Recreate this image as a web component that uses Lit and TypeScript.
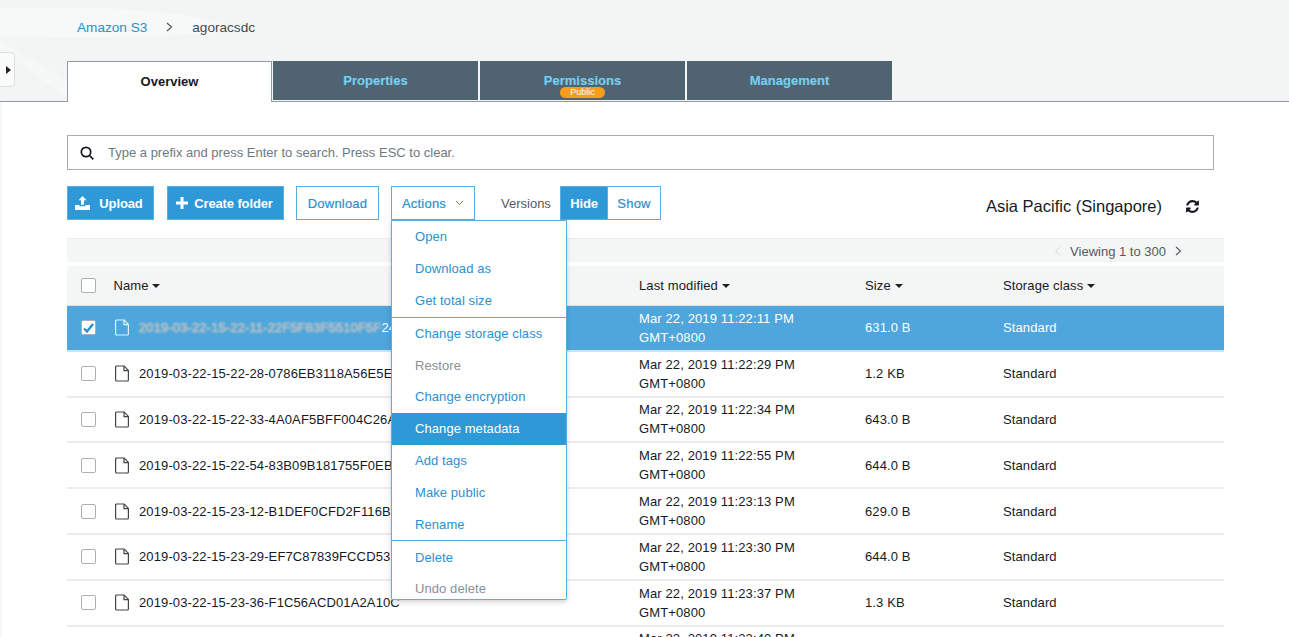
import { LitElement, html, css, svg } from "lit";
import { customElement } from "lit/decorators.js";

const rows = [
  ["2019-03-22-15-22-11-22F5F83F5510F5F", "11:22:11", "631.0 B"],
  ["2019-03-22-15-22-28-0786EB3118A56E5E", "11:22:29", "1.2 KB"],
  ["2019-03-22-15-22-33-4A0AF5BFF004C26A", "11:22:34", "643.0 B"],
  ["2019-03-22-15-22-54-83B09B181755F0EB", "11:22:55", "644.0 B"],
  ["2019-03-22-15-23-12-B1DEF0CFD2F116B", "11:23:13", "629.0 B"],
  ["2019-03-22-15-23-29-EF7C87839FCCD53", "11:23:30", "644.0 B"],
  ["2019-03-22-15-23-36-F1C56ACD01A2A10C", "11:23:37", "1.3 KB"],
  ["", "11:23:40", ""],
];

const menu: [string, string][] = [
  ["Open", ""], ["Download as", ""], ["Get total size", "sep"],
  ["Change storage class", ""], ["Restore", "off"], ["Change encryption", ""],
  ["Change metadata", "hot"], ["Add tags", ""], ["Make public", ""], ["Rename", "sep"],
  ["Delete", ""], ["Undo delete", "off"],
];

const fileIcon = svg`<svg class="file" width="15" height="17" viewBox="0 0 15 17" fill="none" stroke="currentColor" stroke-width="1.2"><path d="M1.6 1h7.6l4.2 4.4v9.6a1 1 0 0 1-1 1H1.6a1 1 0 0 1-1-1V2a1 1 0 0 1 1-1z"/><path d="M9 1v4.6h4.4"/></svg>`;
const caret = html`<span class="caret"></span>`;

@customElement("app-root")
export class AppRoot extends LitElement {
  static styles = css`
    :host { display: block; height: 637px; overflow: hidden; position: relative; background: #fff;
      font-family: "Liberation Sans", Arial, sans-serif; font-size: 13px; color: #16191f; }
    .top { position: relative; height: 101px; background: #f3f5f5; border-bottom: 1px solid #8f9aa3; box-sizing: content-box; display: flex; flex-direction: column; padding-left: 67px; }
    .swoosh { position: absolute; left: 0; top: 0; }
    .crumbs { position: relative; height: 61px; display: flex; align-items: center; font-size: 13.6px; padding: 0 0 7px 10px; box-sizing: border-box; color: #3f4a52; }
    .crumbs a { color: #2b8fcf; }
    .crumbs svg { margin: 0 19px; }
    .tabs { position: relative; display: flex; height: 40px; }
    .tab { width: 205px; margin-right: 2px; background: #4f6370; color: #74d0f0; font-weight: bold; display: flex; flex-direction: column; align-items: center; padding-top: 12px; box-sizing: border-box; position: relative; line-height: 15px; height: 39px; -webkit-text-stroke: 0.15px; }
    .tab.on { background: #fff; color: #16191f; border: 1px solid #8f9aa3; border-bottom: 0; height: 41px; width: 205px; margin-right: 1px; padding-top: 12px; font-weight: bold; -webkit-text-stroke: 0; }
    .badge { position: absolute; top: 26px; left: 80px; width: 45px; height: 11px; border-radius: 6px; background: #f89c1c; color: #fff; font-size: 9px; line-height: 11px; text-align: center; font-weight: normal; -webkit-text-stroke: 0; }
    .handle { position: absolute; left: -1px; top: 52px; width: 14px; height: 33px; background: #fbfbfb; border: 1px solid #dcdfe1; border-radius: 0 4px 4px 0; display: flex; align-items: center; justify-content: center; }
    .handle i { width: 0; height: 0; border-left: 5px solid #222; border-top: 4.5px solid transparent; border-bottom: 4.5px solid transparent; margin-left: 2px; }
    .edge { position: absolute; left: 0; top: 102px; bottom: 0; width: 2px; background: #f5f6f6; }
    .main { padding: 33px 65px 0 67px; }
    .search { width: 1147px; height: 35px; box-sizing: border-box; border: 1px solid #a9acae; display: flex; align-items: center; padding-left: 12px; color: #6f7880; gap: 14px; font-size: 13px; }
    .bar { display: flex; align-items: center; height: 34px; margin-top: 16px; width: 1157px; }
    .btn { height: 34px; box-sizing: border-box; border: 1px solid #5aaee0; color: #2b8fcf; background: #fff; display: flex; align-items: center; justify-content: center; letter-spacing: .2px; -webkit-text-stroke: 0.2px; }
    .btn.fill { background: #2f98d6; color: #fff; font-weight: bold; letter-spacing: -.12px; -webkit-text-stroke: 0; }
    .upload { width: 87px; gap: 9px; padding-right: 3px; }
    .create { width: 117px; margin-left: 13px; gap: 6px; padding-right: 2px; }
    .dl { width: 83px; margin-left: 12px; }
    .actions { width: 84px; margin-left: 12px; gap: 9px; }
    .versions { margin-left: 26px; width: 59px; color: #545b64; }
    .hide { width: 48px; }
    .show { width: 54px; margin-left: -1px; }
    .region { margin-left: auto; font-size: 16.5px; margin-right: 24px; color: #16191f; display: flex; align-items: center; padding-top: 6px; }
    .region svg { margin-left: 23px; }
    .pager { margin-top: 18px; width: 1157px; height: 24px; border-top: 1px solid #ebecec; background: #f4f5f5; box-sizing: border-box; display: flex; align-items: center; justify-content: flex-end; padding: 1px 42px 0 0; color: #545b64; gap: 9px; }
    .head, .row { display: grid; grid-template-columns: 32.5px 525.5px 226px 138px 1fr; width: 1157px; align-items: center; box-sizing: border-box; letter-spacing: .12px; }
    .head { margin-top: 4px; height: 40px; background: #f4f5f5; border-bottom: 1px solid #dfe2e2; padding-left: 14px; }
    .row { height: 45.8px; border-bottom: 2px solid #eaeded; padding-left: 14px; line-height: 19px; color: #16191f; }
    .row.sel { background: #4ea6dc; color: #fff; border-bottom-color: #cfe4f2; }
    .name { display: flex; align-items: center; white-space: nowrap; overflow: hidden; padding-left: 1.5px; }
    .name .file { margin-right: 9px; color: #444; flex: none; }
    .sel .name .file { color: #e4f2fb; }
    .blur { color: #c4c4c4; -webkit-text-stroke: 0.6px #c4c4c4; filter: blur(1px); }
    .box { width: 15px; height: 15px; box-sizing: border-box; border: 1px solid #aab0b4; border-radius: 2px; background: #fff; display: flex; align-items: center; justify-content: center; }
    .caret { display: inline-block; width: 0; height: 0; vertical-align: 2px; border-top: 4px solid #222; border-left: 4px solid transparent; border-right: 4px solid transparent; }
    .menu { position: absolute; left: 391px; top: 220px; width: 176px; height: 380px; box-sizing: border-box; background: #fff; border: 1px solid #5aaee0; border-radius: 0 0 2px 2px; box-shadow: 0 2px 5px rgba(0,0,0,.18); display: flex; flex-direction: column; letter-spacing: .08px; }
    .item { height: 31.75px; flex: none; box-sizing: border-box; padding-left: 23px; display: flex; align-items: center; color: #2b8fcf; }
    .item.sep { border-bottom: 1px solid #5aaee0; height: 33.1px; }
    .item.off { color: #8a8f94; }
    .item.hot { background: #2f98d6; color: #fff; }
  `;

  render() {
    return html`
      <div class="top">
        <svg class="swoosh" width="280" height="101" viewBox="0 0 280 101" fill="none"><path d="M0 8c90-2 190 0 240 22-60 8-170 8-240 6z" fill="#f7f8f8"/><path d="M0 50l70 50h30L0 40z" fill="#f6f7f7"/></svg>
        <div class="crumbs"><a>Amazon S3</a><svg width="7" height="10" viewBox="0 0 7 10" fill="none" stroke="#4a5056" stroke-width="1.1"><path d="M1 1l4.5 4L1 9"/></svg><span>agoracsdc</span></div>
        <div class="tabs">
          <div class="tab on">Overview</div>
          <div class="tab">Properties</div>
          <div class="tab">Permissions<span class="badge">Public</span></div>
          <div class="tab">Management</div>
        </div>
      </div>
      <div class="handle"><i></i></div>
      <div class="edge"></div>
      <div class="main">
        <div class="search">
          <svg width="14" height="14" viewBox="0 0 14 14" fill="none" stroke="#16191f" stroke-width="1.7"><circle cx="6" cy="6" r="4.7"/><path d="M9.5 9.5l3.8 3.8"/></svg>
          <span>Type a prefix and press Enter to search. Press ESC to clear.</span>
        </div>
        <div class="bar">
          <div class="btn fill upload"><svg width="15" height="14" viewBox="0 0 15 14" fill="#fff"><path d="M7.5 0l4 4.2H9v4.6H6V4.2H3.500z"/><path d="M0 9h4.500v1.300h6V9H15v5H0z"/></svg>Upload</div>
          <div class="btn fill create"><svg width="12" height="12" viewBox="0 0 12 12" fill="#fff"><path d="M4.500 0h3v4.500H12v3H7.500V12h-3V7.500H0v-3h4.500z"/></svg>Create folder</div>
          <div class="btn dl">Download</div>
          <div class="btn actions">Actions<svg width="9" height="6" viewBox="0 0 9 6" fill="none" stroke="#2b8fcf" stroke-width="1"><path d="M1 1l3.500 3.500L8 1"/></svg></div>
          <div class="versions">Versions</div>
          <div class="btn fill hide">Hide</div>
          <div class="btn show">Show</div>
          <div class="region">Asia Pacific (Singapore)<svg width="15" height="15" viewBox="0 0 1792 1792" fill="#16191f"><path d="M1639 1056q0 5-1 7-64 268-268 434.5t-478 166.5q-146 0-282.5-55t-243.5-157l-129 129q-19 19-45 19t-45-19-19-45v-448q0-26 19-45t45-19h448q26 0 45 19t19 45-19 45l-137 137q71 66 161 102t187 36q134 0 250-65t186-179q11-17 53-117 8-23 30-23h192q13 0 22.500 9.500t9.500 22.500zm25-800v448q0 26-19 45t-45 19h-448q-26 0-45-19t-19-45 19-45l138-138q-148-137-349-137-134 0-250 65t-186 179q-11 17-53 117-8 23-30 23h-199q-13 0-22.500-9.500t-9.500-22.500v-7q65-268 270-434.500t480-166.500q146 0 284 55.500t245 156.500l130-129q19-19 45-19t45 19 19 45z"/></svg></div>
        </div>
        <div class="pager">
          <svg width="7" height="10" viewBox="0 0 7 10" fill="none" stroke="#e2e4e5" stroke-width="1.100"><path d="M6 1L1.500 5 6 9"/></svg>
          <span>Viewing 1 to 300</span>
          <svg width="7" height="10" viewBox="0 0 7 10" fill="none" stroke="#545b64" stroke-width="1.100"><path d="M1 1l4.500 4L1 9"/></svg>
        </div>
        <div class="head">
          <div class="box"></div>
          <div>Name ${caret}</div>
          <div>Last modified ${caret}</div>
          <div>Size ${caret}</div>
          <div>Storage class ${caret}</div>
        </div>
        ${rows.map((r, i) => html`
          <div class="row ${i === 0 ? "sel" : ""}">
            ${r[0] ? html`<div class="box">${i === 0 ? html`<svg width="11" height="10" viewBox="0 0 11 10" fill="none" stroke="#2b8fcf" stroke-width="2.400"><path d="M1 5.500l3 3L10 1"/></svg>` : ""}</div>` : html`<div></div>`}
            <div class="name">${r[0] ? fileIcon : ""}${i === 0 ? html`<span class="blur">${r[0]}</span><span>24</span>` : r[0]}</div>
            <div>Mar 22, 2019 ${r[1]} PM<br />GMT+0800</div>
            <div>${r[2]}</div>
            <div>${r[0] ? "Standard" : ""}</div>
          </div>`)}
      </div>
      <div class="menu">
        ${menu.map(([t, c]) => html`<div class="item ${c}">${t}</div>`)}
      </div>
    `;
  }
}
